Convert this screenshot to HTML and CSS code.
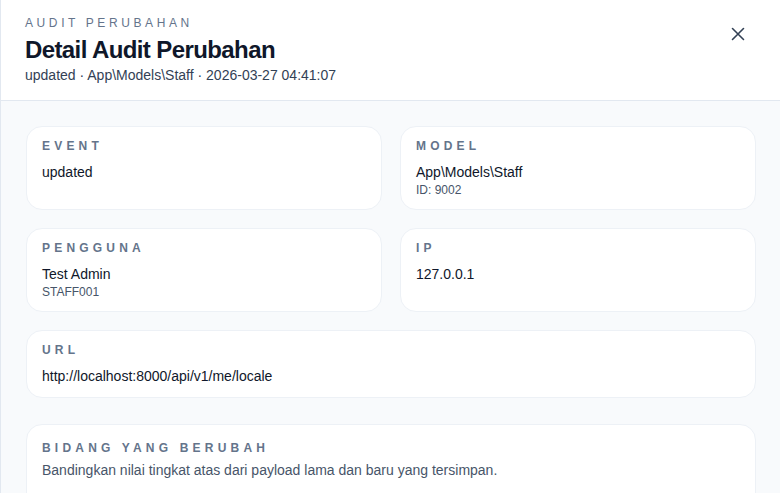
FILE: index.html
```html
<!DOCTYPE html>
<html lang="id">
<head>
  <meta charset="UTF-8">
  <meta name="viewport" content="width=device-width, initial-scale=1.0">
  <title>Detail Audit Perubahan</title>
  <link rel="stylesheet" href="styles.css">
</head>
<body>
  <aside class="drawer">
    <header class="drawer-header">
      <div class="heading">
        <p class="eyebrow">Audit Perubahan</p>
        <h1 class="title">Detail Audit Perubahan</h1>
        <p class="subtitle">updated · App\Models\Staff · 2026-03-27 04:41:07</p>
      </div>
      <button class="close-btn" aria-label="Tutup">
        <svg width="14" height="14" viewBox="0 0 14 14" fill="none" stroke="currentColor" stroke-width="1.6" stroke-linecap="round">
          <path d="M1.5 1.5 12.5 12.5M12.5 1.5 1.5 12.5"/>
        </svg>
      </button>
    </header>

    <div class="drawer-body">
      <div class="info-grid">
        <div class="card">
          <p class="label">Event</p>
          <p class="value">updated</p>
        </div>
        <div class="card">
          <p class="label">Model</p>
          <p class="value">App\Models\Staff</p>
          <p class="sub">ID: 9002</p>
        </div>
        <div class="card">
          <p class="label">Pengguna</p>
          <p class="value">Test Admin</p>
          <p class="sub">STAFF001</p>
        </div>
        <div class="card">
          <p class="label">IP</p>
          <p class="value">127.0.0.1</p>
        </div>
        <div class="card wide">
          <p class="label">URL</p>
          <p class="value">http://localhost:8000/api/v1/me/locale</p>
        </div>
      </div>

      <section class="card changes">
        <p class="label">Bidang yang berubah</p>
        <p class="desc">Bandingkan nilai tingkat atas dari payload lama dan baru yang tersimpan.</p>
        <div class="changes-list"></div>
      </section>
    </div>
  </aside>
</body>
</html>
```

FILE: styles.css
```css
* {
  box-sizing: border-box;
}

html, body {
  margin: 0;
  height: 100%;
}

body {
  font-family: "Liberation Sans", Arial, sans-serif;
  background: #ffffff;
  color: #0f172a;
  overflow: hidden;
}

p, h1 {
  margin: 0;
}

.drawer {
  height: 100%;
  border-left: 1px solid #e2e8f0;
  display: flex;
  flex-direction: column;
}

.drawer-header {
  display: flex;
  justify-content: space-between;
  align-items: flex-start;
  padding: 15px 26px 15px 24px;
  background: #ffffff;
  border-bottom: 1px solid #e2e8f0;
}

.eyebrow {
  font-size: 12px;
  line-height: 16px;
  letter-spacing: 0.3em;
  text-transform: uppercase;
  color: #64748b;
  margin-bottom: 4px;
}

.title {
  font-size: 24px;
  line-height: 30px;
  font-weight: 700;
  letter-spacing: -0.025em;
  color: #0f172a;
}

.subtitle {
  font-size: 14px;
  line-height: 20px;
  color: #334155;
}

.close-btn {
  width: 32px;
  height: 32px;
  margin-top: 3px;
  border: none;
  background: transparent;
  color: #334155;
  display: flex;
  align-items: center;
  justify-content: center;
  padding: 0;
  cursor: pointer;
}

.drawer-body {
  flex: 1;
  background: #f8fafc;
  padding: 25px 24px 0 25px;
}

.info-grid {
  display: grid;
  grid-template-columns: 1fr 1fr;
  gap: 18px;
}

.card {
  background: #ffffff;
  border: 1px solid #edf1f6;
  border-radius: 16px;
  padding: 11px 15px;
}

.card.wide {
  grid-column: 1 / -1;
}

.label {
  font-size: 12px;
  line-height: 16px;
  font-weight: 700;
  letter-spacing: 0.35em;
  text-transform: uppercase;
  color: #64748b;
}

.value {
  margin-top: 8px;
  font-size: 14px;
  line-height: 20px;
  color: #0f172a;
}

.sub {
  font-size: 12px;
  line-height: 16px;
  color: #475569;
}

.changes {
  margin-top: 26px;
  padding-top: 15px;
}

.desc {
  margin-top: 4px;
  font-size: 14px;
  line-height: 20px;
  color: #475569;
}

.changes-list {
  height: 60px;
}
```
